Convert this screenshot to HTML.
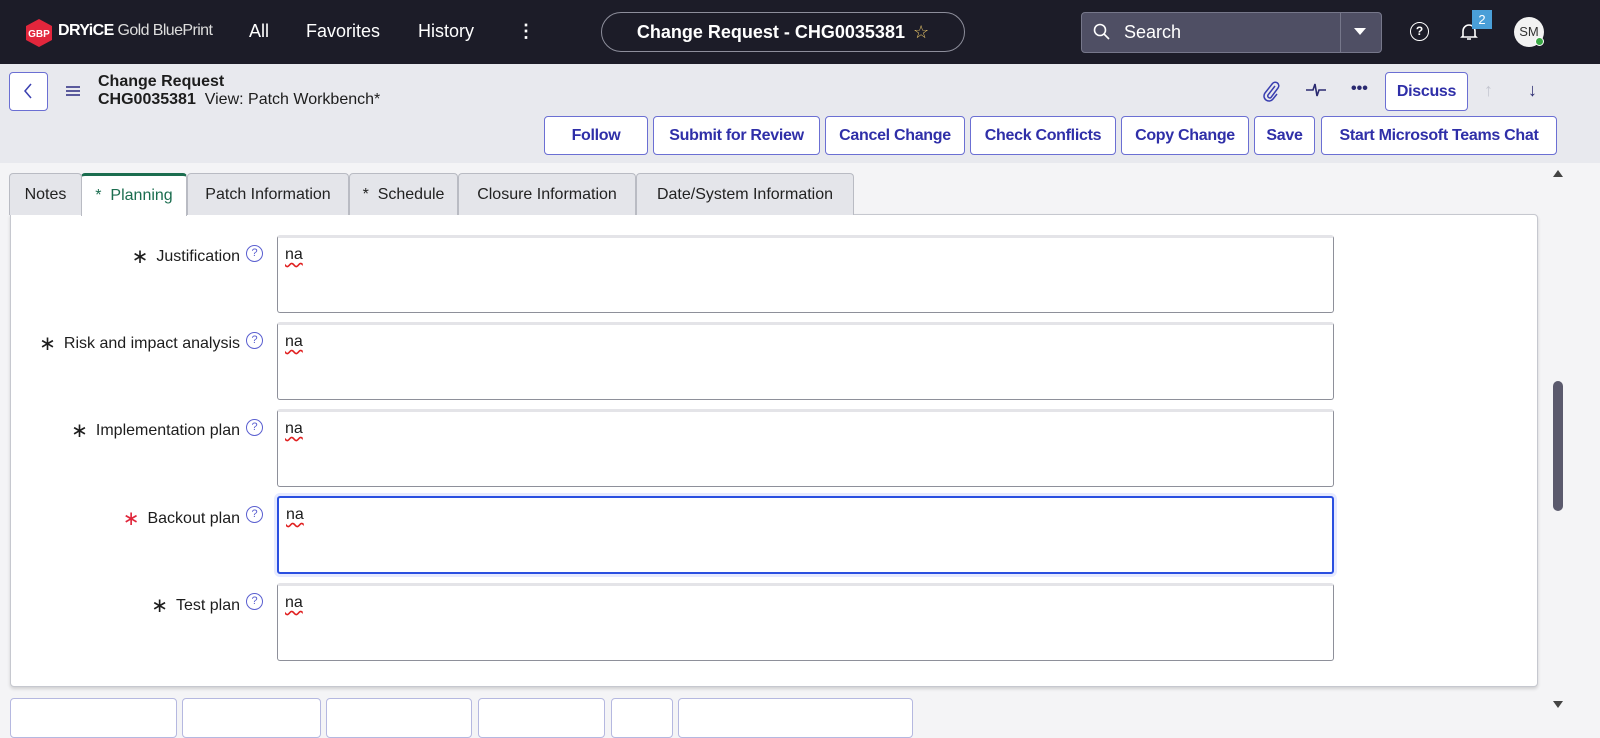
<!DOCTYPE html>
<html><head><style>
*{box-sizing:border-box;margin:0;padding:0}
body{width:1600px;height:727px;overflow:hidden;font-family:"Liberation Sans",sans-serif;background:#f4f4f6;position:relative;color:#1d1d1d}
.a{position:absolute}
.nav{left:0;top:0;width:1600px;height:64px;background:#1c1c28}
.nt{color:#fff;font-size:18px;top:21px}
.hdr{left:0;top:64px;width:1600px;height:99px;background:#e8e9ee}
.btn{position:absolute;height:39px;border:1px solid #6b6fd3;border-radius:4px;background:#fff;color:#2f2fa8;font-size:16px;font-weight:bold;display:flex;align-items:center;justify-content:center;letter-spacing:-0.3px}
.tab{position:absolute;top:173px;height:42px;background:#e4e5ea;border:1px solid #b9bbc3;border-bottom:none;border-radius:4px 4px 0 0;font-size:16px;display:flex;align-items:center;justify-content:center;color:#222}
.panel{left:10px;top:214px;width:1528px;height:473px;background:#fff;border:1px solid #c6c8cf;border-radius:0 4px 4px 4px;box-shadow:0 2px 3px rgba(0,0,0,.15)}
.ta{position:absolute;left:277px;width:1057px;height:78px;border:1px solid #8e909a;border-radius:3px;background:#fff;border-top:3px solid #e4e4e8}
.ta span{position:absolute;left:7px;top:8px;font-size:16px;text-decoration:underline wavy #e02020;text-underline-offset:3px}
.lb{position:absolute;right:1360px;font-size:16px;white-space:nowrap}
.lb b{font-weight:normal;font-size:20px;margin-right:8px;vertical-align:-2px}
.q{position:absolute;left:246px;width:17px;height:17px;border:1.5px solid #5a5fd0;border-radius:50%;color:#5a5fd0;font-size:11px;text-align:center;line-height:14px}
.bb{position:absolute;top:698px;height:40px;border:1px solid #b5b8e0;border-radius:4px;background:#fff}
</style></head><body>
<div class="a nav"></div>
<svg class="a" style="left:24px;top:18px" width="30" height="30" viewBox="0 0 30 30"><polygon points="15,1 28,8 28,22 15,29 2,22 2,8" fill="#e2263c"/><text x="15" y="19" font-size="10" font-weight="bold" fill="#fff" text-anchor="middle" font-family="Liberation Sans">GBP</text></svg>
<div class="a" style="left:58px;top:22px;color:#fff;font-size:16px;letter-spacing:-0.6px"><b>DRYiCE</b> <span style="color:#ddd">Gold BluePrint</span></div>
<div class="a nt" style="left:249px">All</div>
<div class="a nt" style="left:306px">Favorites</div>
<div class="a nt" style="left:418px">History</div>
<div class="a nt" style="left:517px;font-weight:bold">⋮</div>
<div class="a" style="left:601px;top:12px;width:364px;height:40px;border:1px solid #8d8e9b;border-radius:20px;color:#fff;font-size:18px;font-weight:bold;display:flex;align-items:center;justify-content:center">Change Request - CHG0035381 <span style="color:#e8c56a;font-weight:normal;margin-left:8px">☆</span></div>
<div class="a" style="left:1081px;top:12px;width:301px;height:41px;background:#4f4f64;border:1px solid #76778a;border-radius:4px"></div>
<div class="a" style="left:1340px;top:12px;width:1px;height:41px;background:#76778a"></div>
<svg class="a" style="left:1093px;top:23px" width="18" height="18" viewBox="0 0 18 18"><circle cx="7" cy="7" r="5.5" fill="none" stroke="#fff" stroke-width="1.6"/><line x1="11" y1="11" x2="16" y2="16" stroke="#fff" stroke-width="1.6"/></svg>
<div class="a" style="left:1124px;top:22px;color:#fff;font-size:18px">Search</div>
<svg class="a" style="left:1354px;top:28px" width="12" height="8"><polygon points="0,0 12,0 6,7" fill="#fff"/></svg>
<div class="a" style="left:1410px;top:22px;width:19px;height:19px;border:1.8px solid #fff;border-radius:50%;color:#fff;font-size:12px;font-weight:bold;text-align:center;line-height:16px">?</div>
<svg class="a" style="left:1460px;top:22px" width="18" height="20" viewBox="0 0 18 20"><path d="M3 14 V9 a6 6 0 0 1 12 0 V14 L16 15 H2 Z M7 17 h4" fill="none" stroke="#fff" stroke-width="1.6"/></svg>
<div class="a" style="left:1472px;top:10px;width:20px;height:19px;background:#4a9fd8;color:#fff;font-size:13px;text-align:center;line-height:19px">2</div>
<div class="a" style="left:1514px;top:17px;width:30px;height:30px;border-radius:50%;background:#f2f2f2;color:#333;font-size:13px;text-align:center;line-height:30px">SM</div>
<div class="a" style="left:1535px;top:37px;width:9px;height:9px;border-radius:50%;background:#3aa845;border:1px solid #fff"></div>

<div class="a hdr"></div>
<div class="a" style="left:9px;top:72px;width:39px;height:39px;border:1px solid #6b6fd3;border-radius:4px;background:#fff"></div>
<svg class="a" style="left:22px;top:82px" width="12" height="18"><polyline points="9,2 3,9 9,16" fill="none" stroke="#3a3fb0" stroke-width="1.5"/></svg>
<svg class="a" style="left:66px;top:86px" width="14" height="10"><path d="M0 1h14M0 5h14M0 9h14" stroke="#2a2a80" stroke-width="1.6"/></svg>
<div class="a" style="left:98px;top:73px;font-size:16px;font-weight:bold">Change Request</div>
<div class="a" style="left:98px;top:91px;font-size:16px"><b>CHG0035381</b>&nbsp; View: Patch Workbench*</div>
<svg class="a" style="left:1261px;top:80px" width="20" height="22" viewBox="0 0 20 22"><path d="M14 6 L7 15 a2 2 0 0 0 3 2.5 L17 8 a3.5 3.5 0 0 0 -5.5 -4.5 L4 13 a5 5 0 0 0 8 6 L16 14" fill="none" stroke="#3a3fb0" stroke-width="1.5"/></svg>
<svg class="a" style="left:1306px;top:81px" width="20" height="18"><polyline points="0,9 7,9 9,3 11,15 13,9 20,9" fill="none" stroke="#2a2a70" stroke-width="1.6"/></svg>
<div class="a" style="left:1351px;top:80px;font-size:16px;font-weight:bold;color:#2a2a70">•••</div>
<div class="btn" style="left:1385px;top:72px;width:83px">Discuss</div>
<div class="a" style="left:1484px;top:80px;color:#c4c6d0;font-size:18px">↑</div>
<div class="a" style="left:1528px;top:80px;color:#2a2a70;font-size:18px">↓</div>
<div class="btn" style="left:544px;top:116px;width:104px">Follow</div>
<div class="btn" style="left:653px;top:116px;width:167px">Submit for Review</div>
<div class="btn" style="left:825px;top:116px;width:140px">Cancel Change</div>
<div class="btn" style="left:970px;top:116px;width:146px">Check Conflicts</div>
<div class="btn" style="left:1121px;top:116px;width:128px">Copy Change</div>
<div class="btn" style="left:1254px;top:116px;width:61px">Save</div>
<div class="btn" style="left:1321px;top:116px;width:236px">Start Microsoft Teams Chat</div>

<div class="a panel"></div>
<div class="tab" style="left:9px;width:73px">Notes</div>
<div class="tab" style="left:81px;width:106px;background:#fff;border-top:3px solid #1b6d4f;height:43px;color:#1b6d4f;z-index:2">*&nbsp; Planning</div>
<div class="tab" style="left:187px;width:162px">Patch Information</div>
<div class="tab" style="left:349px;width:109px">*&nbsp; Schedule</div>
<div class="tab" style="left:458px;width:178px">Closure Information</div>
<div class="tab" style="left:636px;width:218px">Date/System Information</div>

<div class="lb" style="top:244px"><b>∗</b>Justification</div><div class="q" style="top:245px">?</div>
<div class="ta" style="top:235px"><span>na</span></div>
<div class="lb" style="top:331px"><b>∗</b>Risk and impact analysis</div><div class="q" style="top:332px">?</div>
<div class="ta" style="top:322px"><span>na</span></div>
<div class="lb" style="top:418px"><b>∗</b>Implementation plan</div><div class="q" style="top:419px">?</div>
<div class="ta" style="top:409px"><span>na</span></div>
<div class="lb" style="top:506px"><b style="color:#e0253a">∗</b>Backout plan</div><div class="q" style="top:506px">?</div>
<div class="ta" style="top:496px;border:2px solid #2a4fe0;box-shadow:0 0 0 3px #e6eaff"><span style="top:8px">na</span></div>
<div class="lb" style="top:593px"><b>∗</b>Test plan</div><div class="q" style="top:593px">?</div>
<div class="ta" style="top:583px"><span>na</span></div>

<div class="bb" style="left:10px;width:167px"></div>
<div class="bb" style="left:182px;width:139px"></div>
<div class="bb" style="left:326px;width:146px"></div>
<div class="bb" style="left:478px;width:127px"></div>
<div class="bb" style="left:611px;width:62px"></div>
<div class="bb" style="left:678px;width:235px"></div>

<svg class="a" style="left:1553px;top:170px" width="10" height="8"><polygon points="0,7 10,7 5,0" fill="#444"/></svg>
<div class="a" style="left:1553px;top:381px;width:10px;height:130px;background:#5b5a6d;border-radius:5px"></div>
<svg class="a" style="left:1553px;top:701px" width="10" height="8"><polygon points="0,0 10,0 5,7" fill="#444"/></svg>
</body></html>
